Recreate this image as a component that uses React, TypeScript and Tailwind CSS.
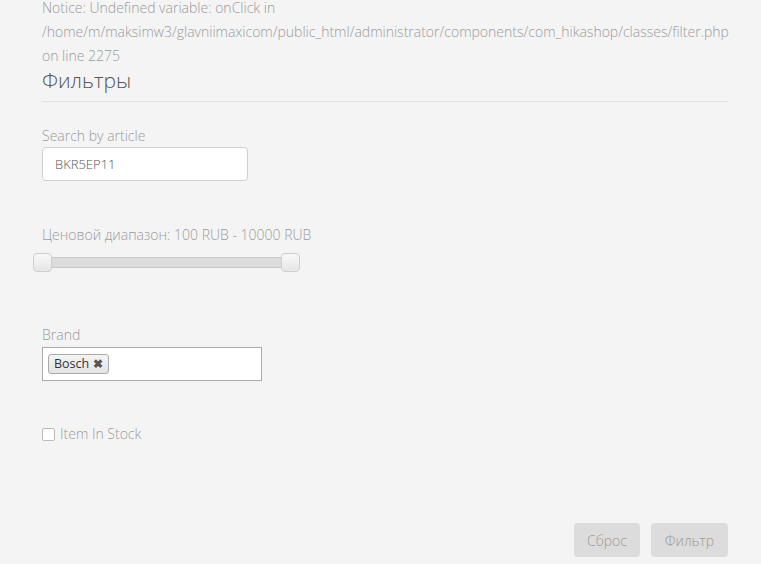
import { useState } from "react";

// Filter panel: notice line, title, search, price range, brand tags, stock checkbox, actions
export default function App() {
  const [article, setArticle] = useState("BKR5EP11");
  const [brands, setBrands] = useState<string[]>(["Bosch"]);
  const [inStock, setInStock] = useState(false);

  return (
    <div className="w-[761px] h-[581px] bg-white" style={{ fontFamily: "'Open Sans', sans-serif" }}>
      <div className="h-[564px] bg-[#f4f4f4] pl-[42px] pr-[33px] flex flex-col font-light">
        <div className="text-[14px] leading-[24px] text-[#9b9b9b] -mt-[4px]">
          Notice: Undefined variable: onClick in
          /home/m/maksimw3/glavniimaxicom/public_html/administrator/components/com_hikashop/classes/filter.php
          on line 2275
        </div>

        <h3 className="text-[21px] leading-[28px] text-[#555] -mt-[2px] pb-[7px] border-b border-[#e2e2e2]">
          Фильтры
        </h3>

        {/* article search */}
        <label className="mt-[24px] text-[14px] leading-[20px] text-[#9b9b9b]">Search by article</label>
        <input
          value={article}
          onChange={(e) => setArticle(e.target.value)}
          className="mt-[1px] w-[206px] h-[34px] rounded-[4px] border border-[#cfcfcf] bg-white px-[12px] text-[13px] text-[#555] font-light outline-none"
        />

        {/* price range */}
        <div className="mt-[44px] text-[14px] leading-[20px] text-[#9b9b9b]">
          Ценовой диапазон: 100 RUB - 10000 RUB
        </div>
        <div className="relative mt-[8px] w-[267px] h-[19px]">
          <div className="absolute left-[9px] right-[16px] top-[4px] h-[11px] border border-[#c8c8c8] bg-[#dcdcdc] rounded-[2px]" />
          <div className="absolute left-[-9px] top-0 w-[19px] h-[19px] rounded-[4px] border border-[#cfcfcf] bg-gradient-to-b from-[#f8f8f8] to-[#e6e6e6]" />
          <div className="absolute left-[239px] top-0 w-[19px] h-[19px] rounded-[4px] border border-[#cfcfcf] bg-gradient-to-b from-[#f8f8f8] to-[#e6e6e6]" />
        </div>

        {/* brand tags */}
        <label className="mt-[53px] text-[14px] leading-[20px] text-[#9b9b9b]">Brand</label>
        <div className="mt-[2px] w-[220px] h-[34px] border border-[#aaa] bg-white flex items-center px-[5px]">
          {brands.map((b) => (
            <span
              key={b}
              className="flex items-center gap-[4px] h-[20px] px-[5px] rounded-[3px] border border-[#aaa] bg-gradient-to-b from-[#f4f4f4] to-[#e4e4e4] text-[12.5px] text-[#333] font-normal"
            >
              {b}
              <button
                onClick={() => setBrands(brands.filter((x) => x !== b))}
                className="text-[#555] text-[12px] font-bold leading-none"
              >
                ✖
              </button>
            </span>
          ))}
        </div>

        {/* stock */}
        <label className="mt-[43px] flex items-center gap-[5px] text-[14px] leading-[20px] text-[#9b9b9b] cursor-pointer">
          <input
            type="checkbox"
            checked={inStock}
            onChange={() => setInStock(!inStock)}
            className="appearance-none w-[13px] h-[13px] border border-[#bbb] rounded-[2px] bg-white"
          />
          Item In Stock
        </label>

        <div className="mt-auto mb-[7px] flex justify-end gap-[11px]">
          <button className="h-[34px] w-[66px] rounded-[4px] bg-[#dcdcdc] text-[14px] text-[#9a9a9a]">Сброс</button>
          <button className="h-[34px] w-[77px] rounded-[4px] bg-[#dcdcdc] text-[14px] text-[#9a9a9a]">Фильтр</button>
        </div>
      </div>
    </div>
  );
}
